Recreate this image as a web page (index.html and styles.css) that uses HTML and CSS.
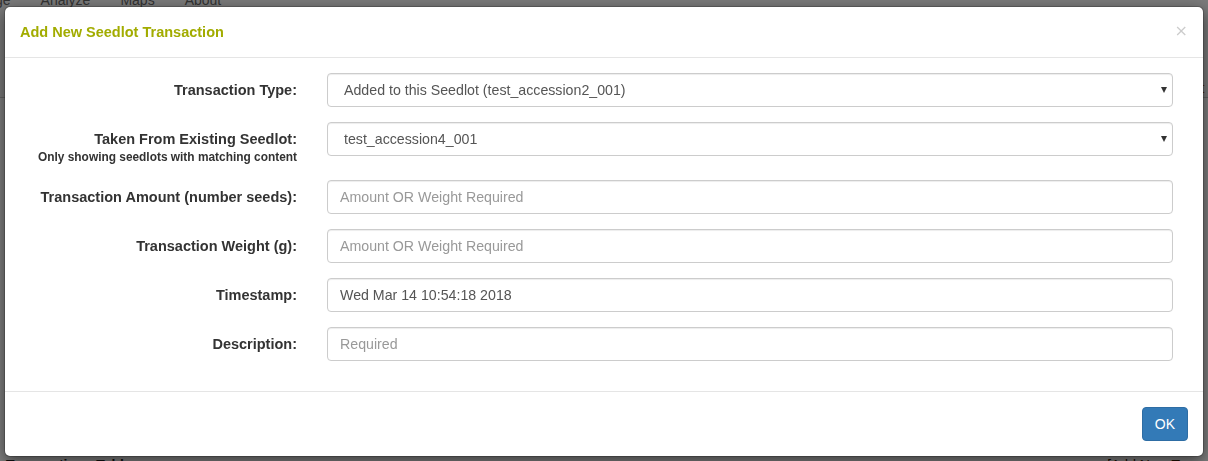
FILE: index.html
```html
<!DOCTYPE html>
<html lang="en">
<head>
<meta charset="utf-8">
<title>Add New Seedlot Transaction</title>
<link rel="stylesheet" href="styles.css">
</head>
<body>
<div class="page">
  <header class="site-header">
    <nav class="topnav">
      <span class="nav-item">Manage</span>
      <span class="nav-item">Analyze</span>
      <span class="nav-item">Maps</span>
      <span class="nav-item">About</span>
    </nav>
    <div class="header-row">
      <span class="header-link">[Edit Seedlot Detail]</span>
    </div>
  </header>
  <main class="page-main">
    <div class="section-row">
      <span class="section-title">Transactions Table</span>
      <span class="section-link">[Add New Transaction]</span>
    </div>
  </main>
</div>

<div class="backdrop"></div>

<div class="modal">
  <div class="modal-content">
    <div class="modal-header">
      <span class="modal-title">Add New Seedlot Transaction</span>
      <button class="close" type="button" aria-label="Close">&times;</button>
    </div>
    <form class="modal-body">
      <div class="form-group">
        <label class="control-label">Transaction Type:</label>
        <div class="field">
          <div class="select-wrap">
            <select class="form-control select">
              <option>Added to this Seedlot (test_accession2_001)</option>
            </select>
          </div>
        </div>
      </div>
      <div class="form-group">
        <label class="control-label">Taken From Existing Seedlot:<small class="hint">Only showing seedlots with matching content</small></label>
        <div class="field">
          <div class="select-wrap">
            <select class="form-control select">
              <option>test_accession4_001</option>
            </select>
          </div>
        </div>
      </div>
      <div class="form-group">
        <label class="control-label">Transaction Amount (number seeds):</label>
        <div class="field"><input class="form-control" type="text" placeholder="Amount OR Weight Required"></div>
      </div>
      <div class="form-group">
        <label class="control-label">Transaction Weight (g):</label>
        <div class="field"><input class="form-control" type="text" placeholder="Amount OR Weight Required"></div>
      </div>
      <div class="form-group">
        <label class="control-label">Timestamp:</label>
        <div class="field"><input class="form-control" type="text" value="Wed Mar 14 10:54:18 2018"></div>
      </div>
      <div class="form-group">
        <label class="control-label">Description:</label>
        <div class="field"><input class="form-control" type="text" placeholder="Required"></div>
      </div>
    </form>
    <div class="modal-footer">
      <button class="btn btn-primary" type="button">OK</button>
    </div>
  </div>
</div>
</body>
</html>
```

FILE: styles.css
```css
* {
  box-sizing: border-box;
}

html, body {
  margin: 0;
  padding: 0;
  height: 100%;
  overflow: hidden;
}

body {
  font-family: "Liberation Sans", Arial, Helvetica, sans-serif;
  font-size: 14px;
  line-height: 20px;
  color: #333;
  background: #fff;
}

/* ---------- background page ---------- */
.page {
  display: flex;
  flex-direction: column;
  height: 100%;
}

.site-header {
  display: flex;
  flex-direction: column;
  height: 98px;
  border-bottom: 1px solid #c8c8c8;
  background: #f4f4f4;
}

.topnav {
  display: flex;
  margin-top: -10px;
  margin-left: -55px;
}

.nav-item {
  padding: 0 15px;
  color: #666;
  font-size: 14px;
  line-height: 20px;
}

.header-row {
  display: flex;
  justify-content: flex-end;
  margin-top: 68px;
  margin-right: -40px;
}

.header-link {
  color: #b05a00;
  font-size: 14px;
  line-height: 20px;
}

.page-main {
  flex: 1;
  display: flex;
  flex-direction: column;
  justify-content: flex-end;
}

.section-row {
  display: flex;
  justify-content: space-between;
  align-items: flex-start;
  padding-left: 6px;
  margin-bottom: -14px;
  margin-right: -40px;
}

.section-title {
  font-weight: bold;
  font-size: 14px;
  line-height: 20px;
  color: #222;
}

.section-link {
  font-size: 14px;
  line-height: 20px;
  color: #3a2000;
}

/* ---------- overlay ---------- */
.backdrop {
  position: fixed;
  inset: 0;
  background: rgba(0, 0, 0, 0.5);
}

.modal {
  position: fixed;
  top: 6px;
  left: 4px;
  right: 4px;
}

.modal-content {
  background: #fff;
  border: 1px solid rgba(0, 0, 0, 0.2);
  border-radius: 6px;
  box-shadow: 0 5px 15px rgba(0, 0, 0, 0.5);
  background-clip: padding-box;
}

.modal-header {
  display: flex;
  justify-content: space-between;
  align-items: flex-start;
  padding: 15px;
  border-bottom: 1px solid #e5e5e5;
}

.modal-title {
  font-size: 14.5px;
  line-height: 20px;
  font-weight: bold;
  color: #a2ac00;
}

.close {
  margin: 0;
  padding: 0;
  border: 0;
  background: transparent;
  font-family: "DejaVu Sans", "Liberation Sans", sans-serif;
  font-size: 16px;
  font-weight: normal;
  line-height: 18px;
  color: #000;
  opacity: 0.2;
  text-shadow: 0 1px 0 #fff;
  cursor: pointer;
}

.modal-body {
  display: block;
  margin: 0;
  padding: 15px;
}

.form-group {
  display: grid;
  grid-template-columns: 25% 75%;
  margin-bottom: 15px;
}

.control-label {
  display: block;
  padding: 7px 15px 0;
  text-align: right;
  font-weight: bold;
  font-size: 14.5px;
  line-height: 20px;
  color: #333;
}

.hint {
  display: block;
  font-size: 11.9px;
  line-height: 16px;
  font-weight: bold;
}

.field {
  padding: 0 15px;
}

.form-control {
  display: block;
  width: 100%;
  height: 34px;
  padding: 6px 12px;
  font-family: "Liberation Sans", Arial, sans-serif;
  font-size: 14.2px;
  line-height: 20px;
  color: #555;
  background: #fff;
  border: 1px solid #ccc;
  border-radius: 4px;
  box-shadow: inset 0 1px 1px rgba(0, 0, 0, 0.075);
  outline: none;
}

.form-control::placeholder {
  color: #999;
  opacity: 1;
}

.select-wrap {
  position: relative;
}

.select {
  -webkit-appearance: none;
  appearance: none;
  padding-left: 16px;
  padding-right: 24px;
}

.select-wrap::after {
  content: "";
  position: absolute;
  right: 6px;
  top: 14px;
  width: 0;
  height: 0;
  border-left: 3.5px solid transparent;
  border-right: 3.5px solid transparent;
  border-top: 6px solid #333;
  pointer-events: none;
}

.modal-footer {
  display: flex;
  justify-content: flex-end;
  padding: 15px;
  border-top: 1px solid #e5e5e5;
}

.btn {
  display: inline-block;
  height: 34px;
  padding: 6px 12px;
  font-family: "Liberation Sans", Arial, sans-serif;
  font-size: 14px;
  line-height: 20px;
  border-radius: 4px;
  border: 1px solid transparent;
  cursor: pointer;
}

.btn-primary {
  color: #fff;
  background: #337ab7;
  border-color: #2e6da4;
}
```
